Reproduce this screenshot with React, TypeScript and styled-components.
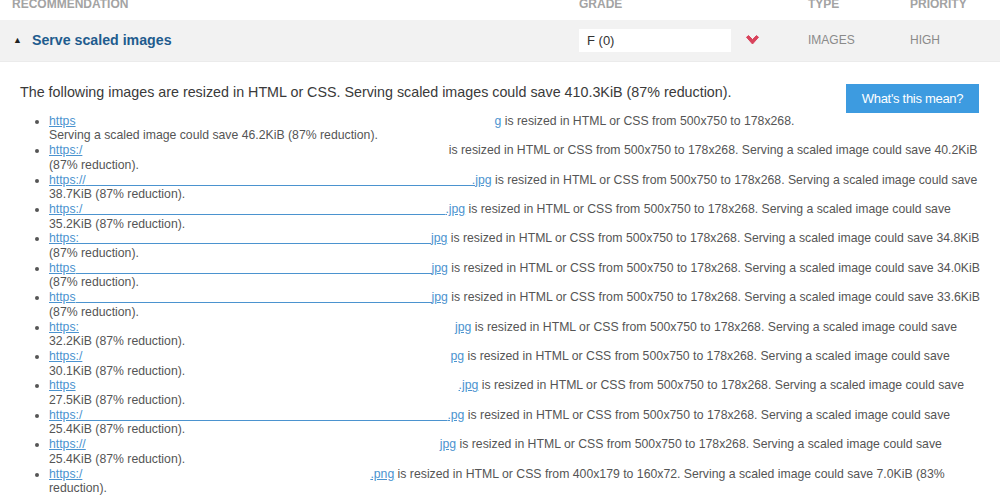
import React from 'react'
import styled, { createGlobalStyle } from 'styled-components'

const colors = {
  label: '#a3a3a3',
  band: '#f2f2f2',
  title: '#1f5c8e',
  text: '#555555',
  intro: '#3a3a3a',
  link: '#4b93cf',
  button: '#3d9be0',
  chevron: '#d9435c',
}

interface Item {
  prefix: string
  mask: number
  tail: string
  underline: boolean
  rest: string
  more?: string
}

const resized = ' is resized in HTML or CSS from 500x750 to 178x268.'
const saving = (kib: string) => ` Serving a scaled image could save ${kib}KiB (87% reduction).`
const std = (kib: string) => resized + saving(kib)

const items: Item[] = [
  {
    prefix: 'https',
    mask: 419,
    tail: 'g',
    underline: false,
    rest: resized,
    more: 'Serving a scaled image could save 46.2KiB (87% reduction).',
  },
  { prefix: 'https:/', mask: 363, tail: '', underline: false, rest: std('40.2') },
  { prefix: 'https://', mask: 386, tail: '.jpg', underline: true, rest: std('38.7') },
  { prefix: 'https:/', mask: 363, tail: '.jpg', underline: true, rest: std('35.2') },
  { prefix: 'https:', mask: 352, tail: 'jpg', underline: true, rest: std('34.8') },
  { prefix: 'https', mask: 356, tail: 'jpg', underline: true, rest: std('34.0') },
  { prefix: 'https', mask: 356, tail: 'jpg', underline: true, rest: std('33.6') },
  { prefix: 'https:', mask: 376, tail: 'jpg', underline: false, rest: std('32.2') },
  { prefix: 'https:/', mask: 368, tail: 'pg', underline: false, rest: std('30.1') },
  { prefix: 'https', mask: 383, tail: '.jpg', underline: false, rest: std('27.5') },
  { prefix: 'https:/', mask: 365, tail: '.pg', underline: true, rest: std('25.4') },
  { prefix: 'https://', mask: 354, tail: 'jpg', underline: false, rest: std('25.4') },
  {
    prefix: 'https:/',
    mask: 288,
    tail: '.png',
    underline: false,
    rest: ' is resized in HTML or CSS from 400x179 to 160x72. Serving a scaled image could save 7.0KiB (83% reduction).',
  },
]

const Chevron = () => (
  <svg width="15" height="10" viewBox="0 0 15 10">
    <path
      d="M1.5 2.2 L3.6 0.6 L7.5 4.6 L11.4 0.6 L13.5 2.2 L7.5 9 Z"
      fill={colors.chevron}
      stroke={colors.chevron}
      strokeWidth="1"
      strokeLinejoin="round"
    />
  </svg>
)

const App: React.FunctionComponent = () => {
  return (
    <Page>
      <GlobalStyle />
      <ColumnRow className="head">
        <HeadLabel>Recommendation</HeadLabel>
        <HeadLabel>Grade</HeadLabel>
        <HeadLabel>Type</HeadLabel>
        <HeadLabel>Priority</HeadLabel>
      </ColumnRow>
      <Band>
        <ColumnRow>
          <Title>
            <Caret>▲</Caret>
            Serve scaled images
          </Title>
          <GradeCell>
            <GradeBox>F (0)</GradeBox>
            <Chevron />
          </GradeCell>
          <CellText>IMAGES</CellText>
          <CellText>HIGH</CellText>
        </ColumnRow>
      </Band>
      <Details>
        <IntroRow>
          <Intro>
            The following images are resized in HTML or CSS. Serving scaled images could save 410.3KiB (87%
            reduction).
          </Intro>
          <InfoButton>What's this mean?</InfoButton>
        </IntroRow>
        <List>
          {items.map((item, i) => (
            <li key={i}>
              <Link href="#">
                {item.prefix}
                <Mask $underline={item.underline} style={{ width: item.mask }} />
                {item.tail}
              </Link>
              {item.rest}
              {item.more && (
                <>
                  <br />
                  {item.more}
                </>
              )}
            </li>
          ))}
        </List>
      </Details>
    </Page>
  )
}

export default App

const GlobalStyle = createGlobalStyle`
  html, body {
    margin: 0;
    padding: 0;
    background: #ffffff;
    overflow: hidden;
  }
  body {
    font-family: "Liberation Sans", Arial, sans-serif;
  }
`

const Page = styled.div`
  width: 1000px;
  height: 496px;
  overflow: hidden;
  display: flex;
  flex-direction: column;

  .head {
    height: 20px;
    align-items: flex-start;
  }
`

const ColumnRow = styled.div`
  display: grid;
  grid-template-columns: 567px 229px 102px 1fr;
  align-items: center;
  padding-left: 12px;
`

const HeadLabel = styled.div`
  margin-top: -3px;
  font-size: 12px;
  line-height: 14px;
  font-weight: bold;
  color: ${colors.label};
  text-transform: uppercase;
`

const Band = styled.div`
  background: ${colors.band};
  height: 41px;
  display: flex;
  flex-direction: column;
  justify-content: center;
  border-bottom: 1px solid #ebebeb;
`

const Title = styled.div`
  display: flex;
  align-items: center;
  font-size: 14.2px;
  font-weight: bold;
  color: ${colors.title};
`

const Caret = styled.span`
  font-size: 9px;
  color: #222;
  margin-left: 1px;
  margin-right: 10px;
`

const GradeCell = styled.div`
  display: flex;
  align-items: center;
  gap: 14px;
`

const GradeBox = styled.div`
  box-sizing: border-box;
  width: 152px;
  height: 23px;
  background: #ffffff;
  padding-left: 8px;
  font-size: 13px;
  line-height: 23px;
  color: #333;
`

const CellText = styled.div`
  font-size: 12px;
  color: #8a8a8a;
`

const Details = styled.div`
  padding: 21px 21px 0 20px;
`

const IntroRow = styled.div`
  display: flex;
  justify-content: space-between;
  align-items: flex-start;
`

const Intro = styled.p`
  margin: 0;
  font-size: 14.3px;
  line-height: 18px;
  color: ${colors.intro};
`

const InfoButton = styled.button`
  margin-top: 1px;
  width: 133px;
  height: 29px;
  border: none;
  background: ${colors.button};
  color: #ffffff;
  font-family: "Liberation Sans", Arial, sans-serif;
  font-size: 13px;
  letter-spacing: -0.3px;
  padding: 0;
  cursor: pointer;
`

const List = styled.ul`
  margin: 1px -3px 0 0;
  padding-left: 29px;
  font-size: 12.25px;
  line-height: 14.7px;
  color: ${colors.text};
`

const Link = styled.a`
  color: ${colors.link};
  text-decoration: underline;
`

const Mask = styled.span<{ $underline: boolean }>`
  display: inline-block;
  height: 11px;
  vertical-align: baseline;
  border-bottom: 1px solid ${p => (p.$underline ? colors.link : 'transparent')};
  margin-bottom: -2px;
`
